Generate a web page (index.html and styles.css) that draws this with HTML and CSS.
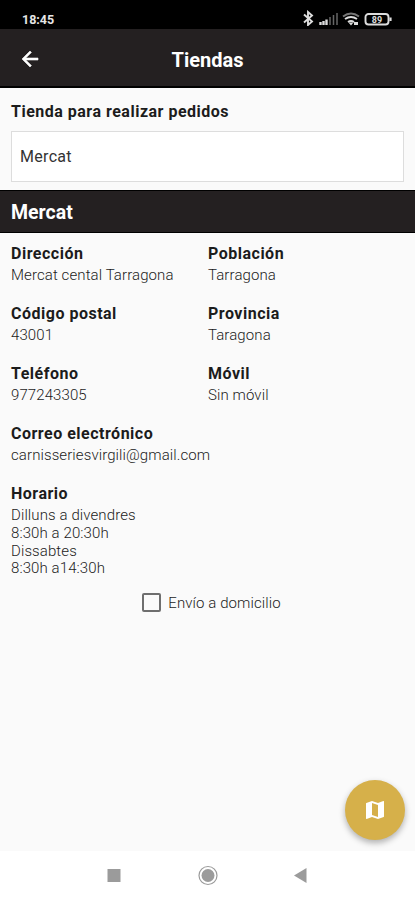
FILE: index.html
```html
<!DOCTYPE html>
<html lang="es">
<head>
  <meta charset="UTF-8">
  <meta name="viewport" content="width=device-width, initial-scale=1">
  <title>Tiendas</title>
  <link rel="stylesheet" href="styles.css">
</head>
<body>
  <div class="estado">
    <span class="hora">18:45</span>
    <svg class="iconos" width="92" height="16" viewBox="0 0 92 16">
      <path d="M3 4.500l8 7-4 3.500V2l4 3.500-8 7" fill="none" stroke="#ddd" stroke-width="1.900"/>
      <path d="M19.500 12v3M22.500 11v4M25.500 9.500V15" stroke="#ddd" stroke-width="2.400"/>
      <path d="M29 7v8M32.500 5v10M36 3v12" stroke="#666" stroke-width="1.500"/>
      <path d="M42 6.500q8-6 16 0" fill="none" stroke="#777" stroke-width="2"/>
      <path d="M44 9q6-4 12 0M47 12q3-2 6 0" fill="none" stroke="#ddd" stroke-width="2"/>
      <path d="M47.500 12.500h5l-2.500 3zM53 12h4v3h-4z" fill="#ddd"/>
      <rect x="64.500" y="4" width="23" height="10.500" rx="3" fill="none" stroke="#ddd" stroke-width="1.900"/>
      <path d="M89.500 7.500v3.500" stroke="#ddd" stroke-width="2.200"/>
      <text class="carga" x="76" y="12.500" text-anchor="middle">89</text>
    </svg>
  </div>

  <header class="cabecera">
    <svg class="volver" width="24" height="24" viewBox="0 0 24 24" fill="#fff">
      <path d="M20 11H7.830l5.590-5.590L12 4l-8 8 8 8 1.410-1.410L7.830 13H20v-2z" stroke="#fff" stroke-width=".6"/>
    </svg>
    <h1>Tiendas</h1>
  </header>

  <main>
    <section class="selector">
      <h2>Tienda para realizar pedidos</h2>
      <div class="campo">Mercat</div>
    </section>

    <h2 class="banda">Mercat</h2>

    <dl class="datos">
      <div><dt>Dirección</dt><dd>Mercat cental Tarragona</dd></div>
      <div><dt>Población</dt><dd>Tarragona</dd></div>
      <div><dt>Código postal</dt><dd>43001</dd></div>
      <div><dt>Provincia</dt><dd>Taragona</dd></div>
      <div><dt>Teléfono</dt><dd>977243305</dd></div>
      <div><dt>Móvil</dt><dd>Sin móvil</dd></div>
      <div class="ancho"><dt>Correo electrónico</dt><dd>carnisseriesvirgili@gmail.com</dd></div>
      <div class="ancho">
        <dt>Horario</dt>
        <dd>Dilluns a divendres<br>8:30h a 20:30h<br>Dissabtes<br>8:30h a14:30h</dd>
      </div>
    </dl>

    <div class="envio">
      <span class="casilla"></span>
      <span>Envío a domicilio</span>
    </div>
  </main>

  <div class="mapa">
    <svg width="24" height="24" viewBox="0 0 24 24" fill="#fff">
      <path d="M20.500 3l-.16.030L15 5.100 9 3 3.360 4.900c-.21.070-.36.250-.36.480V20.500c0 .28.220.5.500.5l.16-.03L9 18.900l6 2.100 5.640-1.900c.21-.07.360-.25.360-.48V3.500c0-.28-.22-.5-.5-.5zM15 19l-6-2.110V5l6 2.110V19z"/>
    </svg>
  </div>

  <nav class="navegacion">
    <svg width="415" height="49" viewBox="0 0 415 49" fill="#9b9b9b">
      <rect x="107.500" y="18" width="13" height="13"/>
      <circle cx="208" cy="24.500" r="6.500"/>
      <circle cx="208" cy="24.500" r="9" fill="none" stroke="#9b9b9b" stroke-width="1.200"/>
      <path d="M294 24.500l12.500-7.500v15z"/>
    </svg>
  </nav>
</body>
</html>
```

FILE: styles.css
```css
* {
  box-sizing: border-box;
}
body {
  margin: 0;
  height: 900px;
  display: flex;
  flex-direction: column;
  position: relative;
  overflow: hidden;
  font-family: Roboto, "Liberation Sans", sans-serif;
  background: #fafafa;
  color: #1c1c1c;
}
h1, h2, dl, dd {
  margin: 0;
}

/* barra de estado */
.estado {
  height: 29px;
  padding: 9px 22px 0 22px;
  display: flex;
  justify-content: space-between;
  align-items: center;
  background: #000;
  color: #e6e6e6;
}
.hora {
  font-size: 12.5px;
  font-weight: 700;
}
.iconos {
  margin-bottom: 2px;
}
.carga {
  font-size: 9px;
  font-weight: 700;
  fill: #ddd;
}

/* cabecera */
.cabecera {
  height: 59px;
  padding: 2px 18px 0;
  display: grid;
  grid-template-columns: 24px 1fr 24px;
  align-items: center;
  background: #242021;
  border-bottom: 2px solid #000;
}
.cabecera h1 {
  padding-top: 2px;
  font-size: 20px;
  font-weight: 700;
  line-height: 24px;
  text-align: center;
  color: #fff;
}

main {
  flex: 1;
}
.selector {
  height: 102px;
  padding: 14px 11px 0;
}
.selector h2 {
  margin-bottom: 9px;
  font-size: 16px;
  font-weight: 700;
  line-height: 20px;
  letter-spacing: .5px;
}
.campo {
  height: 51px;
  padding: 0 8px;
  border: 1px solid #ddd;
  background: #fff;
  color: #333;
  font-size: 16px;
  line-height: 50px;
  letter-spacing: .3px;
}
.banda {
  height: 43px;
  padding-left: 11px;
  border: solid #000;
  border-width: 1px 0;
  background: #242021;
  color: #fff;
  font-size: 19.5px;
  line-height: 43px;
}

.datos {
  display: grid;
  grid-template-columns: 197px 1fr;
  row-gap: 19px;
  padding: 11px 0 0 11px;
}
.datos dt {
  margin-bottom: 3px;
  font-size: 16px;
  font-weight: 700;
  line-height: 20px;
  letter-spacing: .5px;
}
.datos dd {
  min-height: 18px;
  font-size: 15px;
  font-weight: 300;
  line-height: 17.8px;
  letter-spacing: .1px;
}
.ancho {
  grid-column: 1 / 3;
}

.envio {
  display: flex;
  justify-content: center;
  align-items: center;
  gap: 7px;
  padding: 15px 0 0 8px;
  font-size: 15px;
  font-weight: 300;
  line-height: 20px;
  letter-spacing: .1px;
}
.casilla {
  width: 19px;
  height: 19px;
  margin-bottom: 1px;
  border: 2px solid #6e6e6e;
  border-radius: 2px;
}

/* botón flotante */
.mapa {
  position: absolute;
  right: 10px;
  bottom: 60px;
  width: 60px;
  height: 60px;
  display: flex;
  align-items: center;
  justify-content: center;
  border-radius: 50%;
  background: #d6b04a;
  box-shadow: 0 3px 6px rgba(0, 0, 0, .3);
}

.navegacion {
  height: 49px;
  background: #fff;
}
```
